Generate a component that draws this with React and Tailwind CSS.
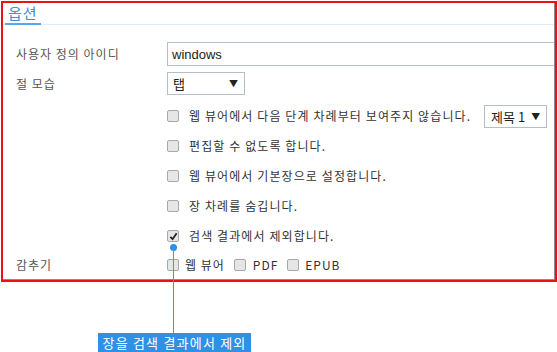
import React from "react";

const Check = ({ checked }) => (
    <span className="w-[12px] h-[12px] rounded-[2px] border border-[#a8a8a8] bg-[#e6e6e6] flex items-center justify-center shrink-0">
        {checked && (
            <svg width="9" height="9" viewBox="0 0 10 10">
                <path d="M1.5 5.5 L4 8 L8.5 1.5" stroke="#222" strokeWidth="2" fill="none" />
            </svg>
        )}
    </span>
);

const CheckRow = ({ checked, children }) => (
    <div className="h-[30px] ml-[164px] flex items-center gap-[10px] text-[12px] tracking-[1.1px] text-[#333]">
        <Check checked={checked} />
        {children}
    </div>
);

const App = () => {
    return (
        <div className="relative w-[557px] h-[352px] bg-white pt-[1px] pl-[1px] font-['Noto_Sans_CJK_KR',sans-serif] leading-none">
            <div className="w-[556px] border-2 border-[#ee1111]">
                <div className="border-r border-b border-[#8c8c8c]">
                    {/* tab header */}
                    <div className="h-[22px] border-b border-[#dcedfb] flex items-end">
                        <span className="ml-[2px] px-[3px] pb-[3px] text-[15px] tracking-[1px] text-[#3b8ee0] border-b-2 border-[#5aa7ea] -mb-px">옵션</span>
                    </div>

                    <div className="pt-[17px]">
                        <div className="flex items-center h-[24px]">
                            <div className="w-[164px] pl-[13px] text-[12px] tracking-[1px] text-[#555]">사용자 정의 아이디</div>
                            <div className="flex-1 h-[24px] border border-[#b3bec6] border-r-0 flex items-center pl-[4px] text-[13px] text-[#222] font-['Liberation_Sans',sans-serif]">windows</div>
                        </div>
                        <div className="flex items-center h-[23px] mt-[6px]">
                            <div className="w-[164px] pl-[13px] text-[12px] tracking-[1px] text-[#555]">절 모습</div>
                            <div className="w-[78px] h-[23px] border border-[#b3bec6] flex items-center justify-between pl-[5px] pr-[6px] text-[13px] text-[#222]">
                                <span>탭</span>
                                <span className="text-[9px]">▼</span>
                            </div>
                        </div>

                        <div className="mt-[6px]">
                            <CheckRow>
                                <span>웹 뷰어에서 다음 단계 차례부터 보여주지 않습니다.</span>
                                <div className="ml-[3px] w-[63px] h-[23px] border border-[#b3bec6] flex items-center pl-[6px] text-[13px] tracking-normal text-[#222]">
                                    <span>제목 1</span>
                                    <span className="ml-[6px] text-[9px]">▼</span>
                                </div>
                            </CheckRow>
                            <CheckRow>편집할 수 없도록 합니다.</CheckRow>
                            <CheckRow>웹 뷰어에서 기본장으로 설정합니다.</CheckRow>
                            <CheckRow>장 차례를 숨깁니다.</CheckRow>
                            <CheckRow checked>검색 결과에서 제외합니다.</CheckRow>
                        </div>

                        <div className="flex items-center h-[28px] text-[12px] tracking-[1px]">
                            <div className="w-[164px] pl-[13px] text-[#555]">감추기</div>
                            <div className="flex items-center text-[#333]">
                                <Check />
                                <span className="ml-[6px]">웹 뷰어</span>
                                <span className="ml-[9px]"><Check /></span>
                                <span className="ml-[7px]">PDF</span>
                                <span className="ml-[9px]"><Check /></span>
                                <span className="ml-[6px]">EPUB</span>
                            </div>
                        </div>
                    </div>
                </div>
            </div>

            {/* annotation callout */}
            <span className="absolute left-[170px] top-[244px] w-[7px] h-[7px] rounded-full bg-[#2f8fe6]" />
            <span className="absolute left-[173px] top-[248px] w-px h-[85px] bg-[#3d97e6]" />
            <div className="absolute left-[98px] top-[333px] w-[153px] h-[19px] bg-[#2f90e4] text-white text-[13px] tracking-[1.2px] flex items-center justify-center">
                장을 검색 결과에서 제외
            </div>
        </div>
    );
};

export default App;
